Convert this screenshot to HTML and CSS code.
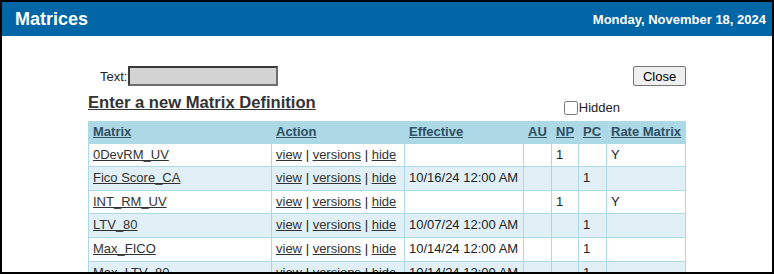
FILE: index.html
```html
<!DOCTYPE html>
<html lang="en">
<head>
    <meta charset="UTF-8">
    <meta name="viewport" content="width=device-width, initial-scale=1.0">
    <title>Matrices</title>
    <link rel="stylesheet" href="styles.css">
</head>
<body>
<div class="frame">
    <div class="titlebar">
        <span class="title">Matrices</span>
        <span class="date">Monday, November 18, 2024</span>
    </div>

    <div class="content">
        <div class="search-row">
            <label class="search-label">Text:<input type="text" class="search-input"></label>
            <button type="button" class="close-btn">Close</button>
        </div>

        <div class="heading-row">
            <a href="#" class="new-link">Enter a new Matrix Definition</a>
            <label class="hidden-toggle"><input type="checkbox">Hidden</label>
        </div>

        <table class="matrix-table">
            <thead>
            <tr>
                <th class="col-matrix"><a href="#">Matrix</a></th>
                <th class="col-action"><a href="#">Action</a></th>
                <th class="col-effective"><a href="#">Effective</a></th>
                <th class="col-au"><a href="#">AU</a></th>
                <th class="col-np"><a href="#">NP</a></th>
                <th class="col-pc"><a href="#">PC</a></th>
                <th class="col-rate"><a href="#">Rate Matrix</a></th>
            </tr>
            </thead>
            <tbody>
            <tr>
                <td><a href="#">0DevRM_UV</a></td>
                <td><a href="#">view</a> | <a href="#">versions</a> | <a href="#">hide</a></td>
                <td></td>
                <td></td>
                <td>1</td>
                <td></td>
                <td>Y</td>
            </tr>
            <tr>
                <td><a href="#">Fico Score_CA</a></td>
                <td><a href="#">view</a> | <a href="#">versions</a> | <a href="#">hide</a></td>
                <td>10/16/24 12:00 AM</td>
                <td></td>
                <td></td>
                <td>1</td>
                <td></td>
            </tr>
            <tr>
                <td><a href="#">INT_RM_UV</a></td>
                <td><a href="#">view</a> | <a href="#">versions</a> | <a href="#">hide</a></td>
                <td></td>
                <td></td>
                <td>1</td>
                <td></td>
                <td>Y</td>
            </tr>
            <tr>
                <td><a href="#">LTV_80</a></td>
                <td><a href="#">view</a> | <a href="#">versions</a> | <a href="#">hide</a></td>
                <td>10/07/24 12:00 AM</td>
                <td></td>
                <td></td>
                <td>1</td>
                <td></td>
            </tr>
            <tr>
                <td><a href="#">Max_FICO</a></td>
                <td><a href="#">view</a> | <a href="#">versions</a> | <a href="#">hide</a></td>
                <td>10/14/24 12:00 AM</td>
                <td></td>
                <td></td>
                <td>1</td>
                <td></td>
            </tr>
            <tr>
                <td><a href="#">Max_LTV_80</a></td>
                <td><a href="#">view</a> | <a href="#">versions</a> | <a href="#">hide</a></td>
                <td>10/14/24 12:00 AM</td>
                <td></td>
                <td></td>
                <td>1</td>
                <td></td>
            </tr>
            </tbody>
        </table>
    </div>
</div>
</body>
</html>
```

FILE: styles.css
```css
html, body {
    margin: 0;
    padding: 0;
    background-color: #ffffff;
    font-family: "Liberation Sans", Arial, sans-serif;
}

.frame {
    height: 274px;
    border: 2px solid #000;
    box-sizing: border-box;
    overflow: hidden;
}

.titlebar {
    display: flex;
    justify-content: space-between;
    align-items: center;
    height: 34px;
    padding: 0 6px 0 13px;
    background-color: #0066a6;
    color: #ffffff;
    font-weight: bold;
}

.title {
    font-size: 18px;
}

.date {
    font-size: 13px;
}

.content {
    width: 598px;
    margin: 0 auto;
    padding-top: 30px;
    font-size: 13px;
    color: #222;
}

.search-row {
    display: flex;
    justify-content: space-between;
    align-items: center;
    padding-left: 12px;
}

.search-label {
    display: flex;
    align-items: center;
}

.search-input {
    width: 150px;
    height: 20px;
    margin: 0 0 0 1px;
    padding: 0;
    box-sizing: border-box;
    background-color: #d3d3d3;
    border: 2px solid #3a3a3a;
    border-right-color: #6e6e6e;
    border-bottom-color: #6e6e6e;
}

.close-btn {
    width: 53px;
    height: 20px;
    padding: 0;
    font-family: inherit;
    font-size: 13px;
    color: #000;
    background-color: #efefef;
    border: 1px solid #767676;
    border-radius: 2px;
}

.heading-row {
    display: flex;
    align-items: flex-end;
    margin-top: 7px;
}

.new-link {
    font-size: 16.6px;
    font-weight: bold;
    color: #333;
}

.hidden-toggle {
    display: flex;
    align-items: center;
    margin-left: auto;
    margin-right: 66px;
    position: relative;
    top: 2px;
}

.hidden-toggle input {
    width: 14px;
    height: 14px;
    margin: 0 1px 0 0;
}

.matrix-table {
    width: 100%;
    margin-top: 8px;
    border-collapse: collapse;
    table-layout: fixed;
}

.matrix-table th,
.matrix-table td {
    box-sizing: border-box;
    padding: 3px 4px;
    border: 1px solid #add8e6;
    text-align: left;
    white-space: nowrap;
    line-height: 16.6px;
}

.matrix-table th {
    background-color: #add8e6;
    padding-top: 2px;
    padding-bottom: 2px;
}

.matrix-table th a {
    color: #2f4f62;
}

.matrix-table td a {
    color: #333;
}

.matrix-table tbody tr:nth-child(even) {
    background-color: #e0f0f6;
}

.col-matrix { width: 183px; }
.col-action { width: 133px; }
.col-effective { width: 119px; }
.col-au { width: 28px; }
.col-np { width: 27px; }
.col-pc { width: 28px; }
```
